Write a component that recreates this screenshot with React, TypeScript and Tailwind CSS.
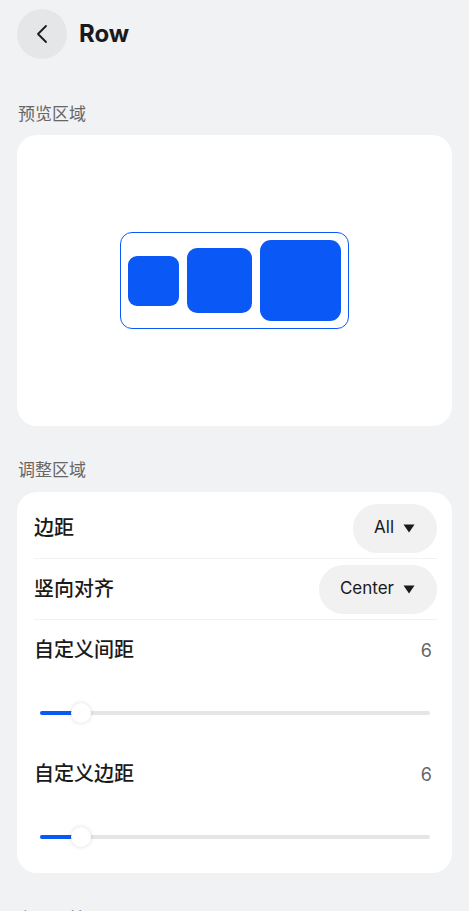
import React from "react";

function Slider({ pct }: { pct: number }) {
  return (
    <div className="relative h-[64px] flex items-start">
      <div className="relative mt-[31px] ml-[6px] mr-[7px] h-[4px] w-full rounded-full bg-[#e5e5e5]">
        <div className="absolute left-0 top-0 h-[4px] rounded-full bg-[#0a59f7]" style={{ width: `${pct}px` }} />
        <div
          className="absolute top-1/2 h-[20px] w-[20px] -translate-x-1/2 -translate-y-1/2 rounded-full bg-white shadow-[0_0_4px_rgba(0,0,0,0.15)]"
          style={{ left: `${pct}px` }}
        />
      </div>
    </div>
  );
}

function Pill({ text }: { text: string }) {
  return (
    <div className="flex h-[49px] items-center gap-[9px] rounded-full bg-[#f1f1f1] pl-[21px] pr-[22px] text-[17px] text-[#1a1a1a]">
      <span>{text}</span>
      <svg width="12" height="9" viewBox="0 0 12 9">
        <path d="M0.5 0.5 L11.5 0.5 L6 8.5 Z" fill="#1a1a1a" />
      </svg>
    </div>
  );
}

export default function App() {
  return (
    <div
      className="min-h-[911px] w-full bg-[#f1f2f4] overflow-hidden"
      style={{ fontFamily: 'Inter, "Noto Sans", "Noto Sans CJK SC", sans-serif' }}
    >
      <div className="flex h-[50px] items-center gap-[12px] px-[17px] mt-[9px]">
        <div className="flex h-[50px] w-[50px] items-center justify-center rounded-full bg-[#e5e6e8]">
          <svg width="14" height="20" viewBox="0 0 14 20">
            <path d="M11 2 L3 10 L11 18" fill="none" stroke="#1a1a1a" strokeWidth="1.8" strokeLinecap="round" strokeLinejoin="round" />
          </svg>
        </div>
        <div className="text-[24px] font-bold text-[#1a1a1a] leading-none">Row</div>
      </div>

      <div className="mt-[44px] px-[18px] text-[17px] leading-[22px] text-[#666666]">预览区域</div>
      <div className="mx-[17px] mt-[10px] flex h-[291px] items-center justify-center rounded-[20px] bg-white">
        <div className="flex items-center gap-[8px] rounded-[12px] border border-[#0a59f7] p-[7px]">
          <div className="h-[50px] w-[51px] rounded-[9px] bg-[#0a59f7]" />
          <div className="h-[65px] w-[65px] rounded-[10px] bg-[#0a59f7]" />
          <div className="h-[81px] w-[81px] rounded-[11px] bg-[#0a59f7]" />
        </div>
      </div>

      <div className="mt-[33px] px-[18px] text-[17px] leading-[22px] text-[#666666]">调整区域</div>
      <div className="mx-[17px] mt-[11px] rounded-[20px] bg-white pl-[17px] pr-[15px] pt-[6px] pb-[5px]">
        <div className="flex h-[61px] items-center justify-between border-b border-[#f2f2f2]">
          <span className="text-[20px] font-medium text-[#1a1a1a]">边距</span>
          <Pill text="All" />
        </div>
        <div className="flex h-[61px] items-center justify-between border-b border-[#f2f2f2]">
          <span className="text-[20px] font-medium text-[#1a1a1a]">竖向对齐</span>
          <Pill text="Center" />
        </div>
        <div className="flex h-[60px] items-center justify-between">
          <span className="text-[20px] font-medium text-[#1a1a1a]">自定义间距</span>
          <span className="pr-[5px] text-[18px] text-[#666666]">6</span>
        </div>
        <Slider pct={41} />
        <div className="flex h-[60px] items-center justify-between">
          <span className="text-[20px] font-medium text-[#1a1a1a]">自定义边距</span>
          <span className="pr-[5px] text-[18px] text-[#666666]">6</span>
        </div>
        <Slider pct={41} />
      </div>

      <div className="mt-[35px] px-[18px] text-[17px] leading-[22px] text-[#666666]">布局属性</div>
      <div className="h-[40px]" />
    </div>
  );
}
